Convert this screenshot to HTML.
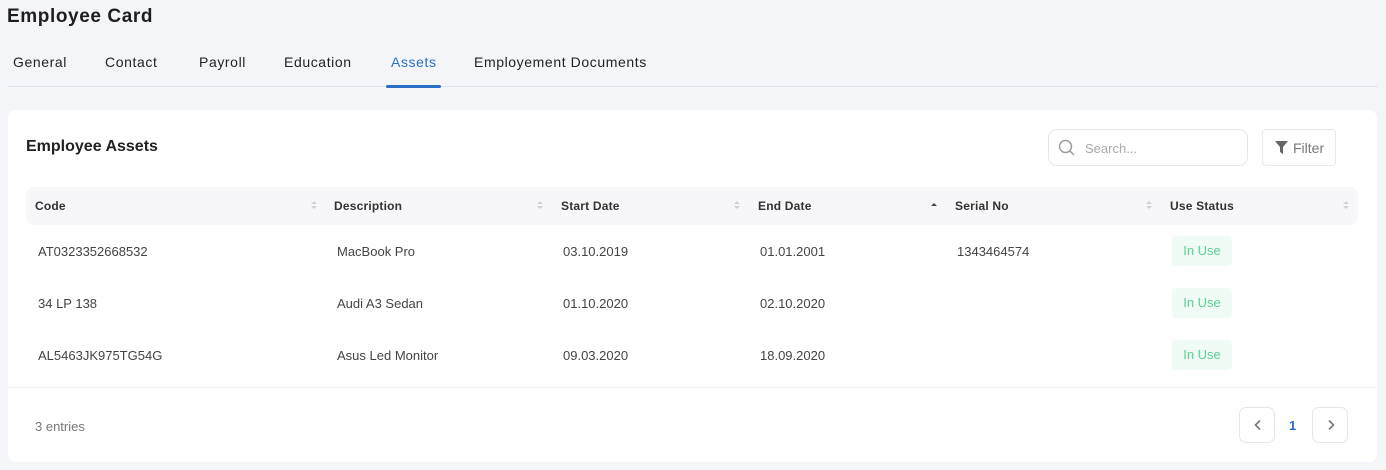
<!DOCTYPE html>
<html><head><meta charset="utf-8"><style>
*{box-sizing:border-box;margin:0;padding:0}
body{width:1386px;height:470px;background:#f4f5f8;font-family:"Liberation Sans",sans-serif;position:relative;overflow:hidden;color:#222}
.abs{position:absolute;white-space:nowrap}
h1{position:absolute;left:7px;top:6px;font-size:19px;font-weight:bold;color:#1e1e1e;letter-spacing:0.6px}
.tab{position:absolute;top:54px;font-size:14px;color:#222;letter-spacing:0.6px}
.card{position:absolute;left:8px;top:110px;width:1369px;height:352px;background:#fff;border-radius:8px}
.th{position:absolute;top:199px;font-size:12px;font-weight:bold;color:#333;letter-spacing:0.2px}
.sort{position:absolute;top:200px}
.td{position:absolute;font-size:13px;color:#444}
.badge{position:absolute;left:1172px;width:60px;height:30px;background:#f0fbf5;color:#5ccf94;font-size:13px;border-radius:4px;text-align:center;line-height:30px}
.pbtn{position:absolute;top:407px;width:36px;height:36px;border:1px solid #e6e6ea;border-radius:7px;background:#fff}
.pbtn svg{position:absolute;left:12px;top:11px}
</style></head><body>
<h1>Employee Card</h1>
<div class="tab" style="left:13px">General</div>
<div class="tab" style="left:105px">Contact</div>
<div class="tab" style="left:199px">Payroll</div>
<div class="tab" style="left:284px">Education</div>
<div class="tab" style="left:391px;color:#2a6fc4">Assets</div>
<div class="tab" style="left:474px">Employement Documents</div>
<div class="abs" style="left:8px;top:86px;width:1370px;height:1px;background:#dde0e6"></div>
<div class="abs" style="left:386px;top:85px;width:55px;height:3px;background:#2a6fc4;border-radius:2px"></div>

<div class="card"></div>
<div class="abs" style="left:26px;top:138px;font-size:16px;font-weight:bold;color:#222">Employee Assets</div>
<div class="abs" style="left:1048px;top:129px;width:200px;height:37px;border:1px solid #e4e5ea;border-radius:9px;background:#fff"></div>
<svg class="abs" style="left:1058px;top:139px" width="18" height="18" viewBox="0 0 18 18"><circle cx="7.5" cy="7.5" r="6" fill="none" stroke="#999" stroke-width="1.4"/><line x1="12" y1="12" x2="16" y2="16" stroke="#999" stroke-width="1.4"/></svg>
<div class="abs" style="left:1085px;top:141px;font-size:13px;color:#aaa">Search...</div>
<div class="abs" style="left:1262px;top:129px;width:74px;height:37px;border:1px solid #e8e9ee;border-radius:4px;background:#fff"></div>
<svg class="abs" style="left:1275px;top:141px" width="13" height="13" viewBox="0 0 13 13"><path d="M0 0H13L8 6V13L5 11V6Z" fill="#666"/></svg>
<div class="abs" style="left:1293px;top:140px;font-size:14px;color:#777">Filter</div>

<div class="abs" style="left:26px;top:187px;width:1332px;height:38px;background:#f7f7f9;border-radius:8px"></div>
<div class="th" style="left:35px">Code</div>
<div class="th" style="left:334px">Description</div>
<div class="th" style="left:561px">Start Date</div>
<div class="th" style="left:758px">End Date</div>
<div class="th" style="left:955px">Serial No</div>
<div class="th" style="left:1170px">Use Status</div>
<svg class="sort" style="left:311px" width="6" height="10" viewBox="0 0 6 10"><path d="M0 4L3 1L6 4ZM0 6L3 9L6 6Z" fill="#d0d0d4"/></svg>
<svg class="sort" style="left:537px" width="6" height="10" viewBox="0 0 6 10"><path d="M0 4L3 1L6 4ZM0 6L3 9L6 6Z" fill="#d0d0d4"/></svg>
<svg class="sort" style="left:734px" width="6" height="10" viewBox="0 0 6 10"><path d="M0 4L3 1L6 4ZM0 6L3 9L6 6Z" fill="#d0d0d4"/></svg>
<svg class="sort" style="left:931px" width="6" height="10" viewBox="0 0 6 10"><path d="M0 6L3 3L6 6Z" fill="#444"/></svg>
<svg class="sort" style="left:1146px" width="6" height="10" viewBox="0 0 6 10"><path d="M0 4L3 1L6 4ZM0 6L3 9L6 6Z" fill="#d0d0d4"/></svg>
<svg class="sort" style="left:1343px" width="6" height="10" viewBox="0 0 6 10"><path d="M0 4L3 1L6 4ZM0 6L3 9L6 6Z" fill="#d0d0d4"/></svg>

<div class="td" style="left:38px;top:244px">AT0323352668532</div>
<div class="td" style="left:337px;top:244px">MacBook Pro</div>
<div class="td" style="left:563px;top:244px">03.10.2019</div>
<div class="td" style="left:760px;top:244px">01.01.2001</div>
<div class="td" style="left:957px;top:244px">1343464574</div>
<div class="badge" style="top:236px">In Use</div>

<div class="td" style="left:38px;top:296px">34 LP 138</div>
<div class="td" style="left:337px;top:296px">Audi A3 Sedan</div>
<div class="td" style="left:563px;top:296px">01.10.2020</div>
<div class="td" style="left:760px;top:296px">02.10.2020</div>
<div class="badge" style="top:288px">In Use</div>

<div class="td" style="left:38px;top:348px">AL5463JK975TG54G</div>
<div class="td" style="left:337px;top:348px">Asus Led Monitor</div>
<div class="td" style="left:563px;top:348px">09.03.2020</div>
<div class="td" style="left:760px;top:348px">18.09.2020</div>
<div class="badge" style="top:340px">In Use</div>

<div class="abs" style="left:8px;top:387px;width:1369px;height:1px;background:#f0f0f3"></div>
<div class="abs" style="left:35px;top:419px;font-size:13px;color:#777">3 entries</div>
<div class="pbtn" style="left:1239px"><svg width="12" height="12" viewBox="0 0 12 12"><path d="M8 1.5L3.5 6L8 10.5" fill="none" stroke="#777" stroke-width="1.6"/></svg></div>
<div class="abs" style="left:1289px;top:418px;font-size:13px;font-weight:bold;color:#2a6fc4">1</div>
<div class="pbtn" style="left:1312px"><svg width="12" height="12" viewBox="0 0 12 12"><path d="M4 1.5L8.5 6L4 10.5" fill="none" stroke="#777" stroke-width="1.6"/></svg></div>
</body></html>
